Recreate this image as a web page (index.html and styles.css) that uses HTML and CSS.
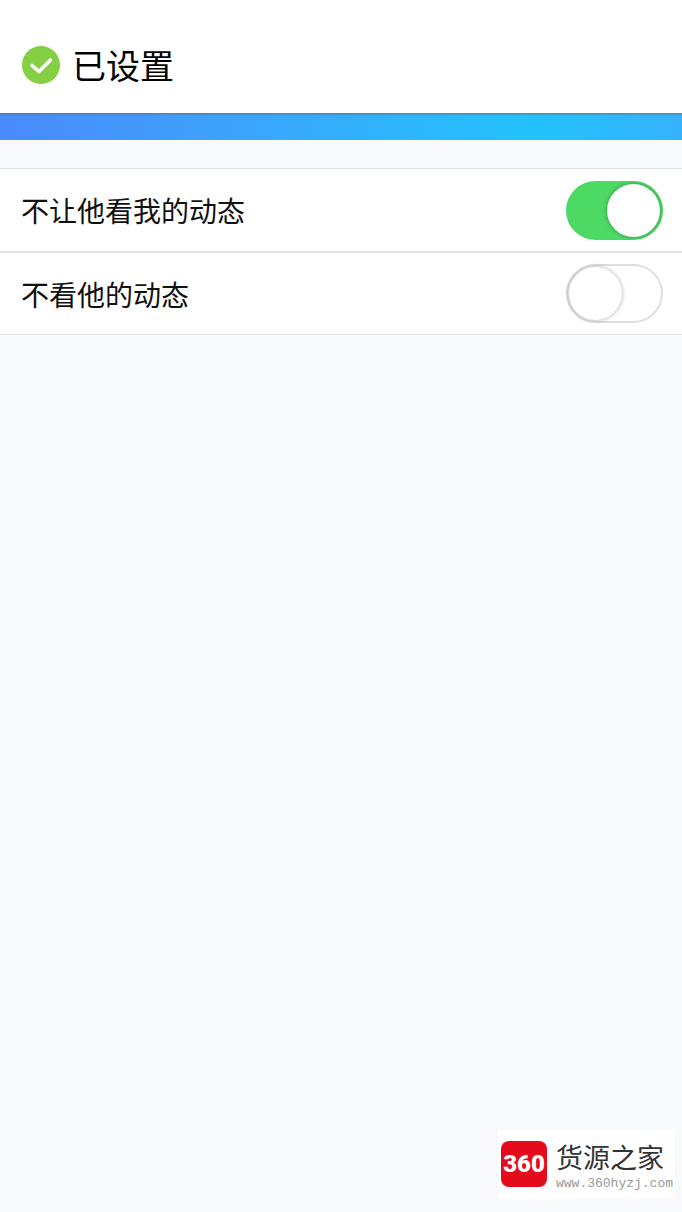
FILE: index.html
```html
<!DOCTYPE html>
<html lang="zh-CN">
<head>
    <meta charset="UTF-8">
    <meta name="viewport" content="width=device-width, initial-scale=1.0">
    <title>已设置</title>
    <link rel="stylesheet" href="styles.css">
</head>
<body>
    <header class="header">
        <svg class="check-icon" viewBox="0 0 38 38" aria-hidden="true">
            <circle cx="19" cy="19" r="19" fill="#84cf43"/>
            <path d="M10 19.5 L17 25.5 L28.5 14" fill="none" stroke="#fff" stroke-width="3.6" stroke-linecap="round" stroke-linejoin="round"/>
        </svg>
        <h1>已设置</h1>
    </header>

    <div class="banner"></div>

    <main class="settings">
        <div class="row">
            <label for="hideMine">不让他看我的动态</label>
            <input type="checkbox" id="hideMine" class="switch" checked>
        </div>
        <div class="row">
            <label for="hideTheirs">不看他的动态</label>
            <input type="checkbox" id="hideTheirs" class="switch">
        </div>
    </main>

    <div class="watermark">
        <div class="logo">360</div>
        <div class="site">
            <div class="site-name">货源之家</div>
            <div class="site-url">www.360hyzj.com</div>
        </div>
    </div>
</body>
</html>
```
FILE: styles.css
```css
:root {
    --page-bg: #f8f9fb;
    --card-bg: #ffffff;
    --border-color: #e0e2e4;
    --switch-on: #4cd964;
    --text-color: #111;
}

* {
    margin: 0;
    padding: 0;
    box-sizing: border-box;
}

body {
    position: relative;
    min-height: 100vh;
    font-family: "Noto Sans CJK SC", sans-serif;
    background-color: var(--page-bg);
    color: var(--text-color);
}

.header {
    display: flex;
    align-items: center;
    gap: 12px;
    padding: 40px 22px 24px;
    background-color: var(--card-bg);
}

.check-icon {
    width: 38px;
    height: 38px;
}

h1 {
    font-size: 34px;
    line-height: 49px;
    font-weight: 400;
    color: #000;
}

.banner {
    height: 27px;
    background: linear-gradient(to right, #4a8afb 0%, #3fa0fc 30%, #22c3fc 78%, #35b2fb 100%);
    border-top: 2px solid rgba(70, 110, 140, 0.4);
}

.settings {
    margin-top: 28px;
    background-color: var(--card-bg);
    border-top: 1px solid var(--border-color);
    border-bottom: 1px solid var(--border-color);
}

.row {
    display: flex;
    align-items: center;
    justify-content: space-between;
    height: 82px;
    padding: 0 19px 0 21px;
}

.row + .row {
    height: 83px;
    border-top: 2px solid var(--border-color);
}

.row label {
    font-size: 28px;
    line-height: 40px;
}

/* 开关 */
.switch {
    appearance: none;
    display: flex;
    width: 97px;
    height: 59px;
    padding: 1px;
    border: 2px solid #dedede;
    border-radius: 30px;
    background-color: #fff;
    cursor: pointer;
}

.switch::before {
    content: "";
    width: 53px;
    height: 53px;
    border-radius: 50%;
    background-color: #fff;
    box-shadow: 0 0 4px rgba(0, 0, 0, 0.35);
}

.switch:checked {
    justify-content: flex-end;
    border-color: var(--switch-on);
    background-color: var(--switch-on);
}

/* 右下角水印 */
.watermark {
    position: absolute;
    right: 7px;
    bottom: 13px;
    display: flex;
    align-items: center;
    gap: 9px;
    width: 177px;
    height: 69px;
    padding: 0 0 2px 3px;
    background-color: var(--card-bg);
}

.logo {
    width: 46px;
    height: 46px;
    border-radius: 8px;
    background-color: #e60b1c;
    color: #fff;
    font-family: Roboto, sans-serif;
    font-size: 24px;
    font-weight: 900;
    line-height: 46px;
    text-align: center;
}

.site-name {
    font-size: 27px;
    line-height: 40px;
    color: #333;
}

.site-url {
    font-family: "Liberation Mono", monospace;
    font-size: 13px;
    line-height: 14px;
    color: #999;
}
```
